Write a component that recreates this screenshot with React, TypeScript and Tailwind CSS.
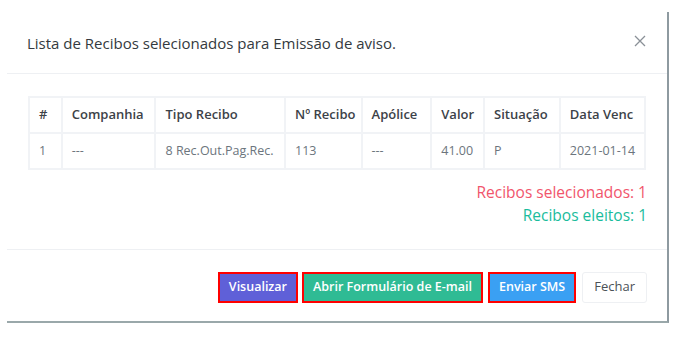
import React from 'react';

const headers = ['#', 'Companhia', 'Tipo Recibo', 'Nº Recibo', 'Apólice', 'Valor', 'Situação', 'Data Venc'];
const widths = ['w-[33px]', 'w-[94px]', 'w-[130px]', 'w-[77px]', 'w-[70px]', 'w-[53px]', 'w-[76px]', 'w-[86px]'];
const row = ['1', '---', '8 Rec.Out.Pag.Rec.', '113', '---', '41.00', 'P', '2021-01-14'];

export default function App() {
  return (
    <div className="w-[682px] h-[340px] bg-white overflow-hidden" style={{ fontFamily: '"Open Sans", "Noto Sans", sans-serif' }}>
      <div className="ml-[7px] mt-[12px] w-[662px] h-[311px] bg-white border-r-2 border-b-2 border-r-[#8e9aa0] border-b-[#9aa8aa] flex flex-col">
        {/* header */}
        <div className="h-[62px] flex items-center justify-between pl-[20px] pr-[20px] border-b border-[#eef0f3]">
          <h4 className="text-[15px] text-[#343a40] pt-[2px]">Lista de Recibos selecionados para Emissão de aviso.</h4>
          <svg width="12" height="12" viewBox="0 0 12 12" className="mb-[4px] mr-[1px]">
            <path d="M1 1 L11 11 M11 1 L1 11" stroke="#8a9097" strokeWidth="1.3" />
          </svg>
        </div>

        {/* body */}
        <div className="flex-1 pl-[21px] pr-[21px] pt-[22px] border-b border-[#eef0f3]">
          <table className="border-collapse text-[13px]">
            <thead>
              <tr className="h-[36px]">
                {headers.map((h, i) => (
                  <th key={h} className={`${widths[i]} border-2 border-[#f1f3f6] text-left font-semibold text-[#3c4248] pl-[9px]`}>{h}</th>
                ))}
              </tr>
            </thead>
            <tbody>
              <tr className="h-[36px]">
                {row.map((c, i) => (
                  <td key={i} className="border-2 border-[#f1f3f6] text-left text-[#6c757d] text-[12.5px] pl-[9px]">{c}</td>
                ))}
              </tr>
            </tbody>
          </table>
          <div className="w-[619px] flex flex-col items-end mt-[11px] text-[15.5px] leading-[23px]">
            <span className="text-[#f1556c]">Recibos selecionados: 1</span>
            <span className="text-[#1abc9c]">Recibos eleitos: 1</span>
          </div>
        </div>

        {/* footer */}
        <div className="h-[71px] flex items-center justify-end gap-[4px] pr-[20px] pt-[3px] text-[12.5px]">
          <button className="h-[31px] px-[9px] bg-[#5f60d8] text-white font-semibold border-2 border-[#ff0000]">Visualizar</button>
          <button className="h-[31px] px-[9px] bg-[#2fbb94] text-white font-semibold border-2 border-[#ff0000]">Abrir Formulário de E-mail</button>
          <button className="h-[31px] ml-[1px] px-[9px] bg-[#3aa0f3] text-white font-semibold border-2 border-[#ff0000]">Enviar SMS</button>
          <button className="h-[31px] ml-[2px] px-[11px] bg-white text-[#4b5157] text-[13px] border border-[#eef0f3] rounded-[3px]">Fechar</button>
        </div>
      </div>
    </div>
  );
}
